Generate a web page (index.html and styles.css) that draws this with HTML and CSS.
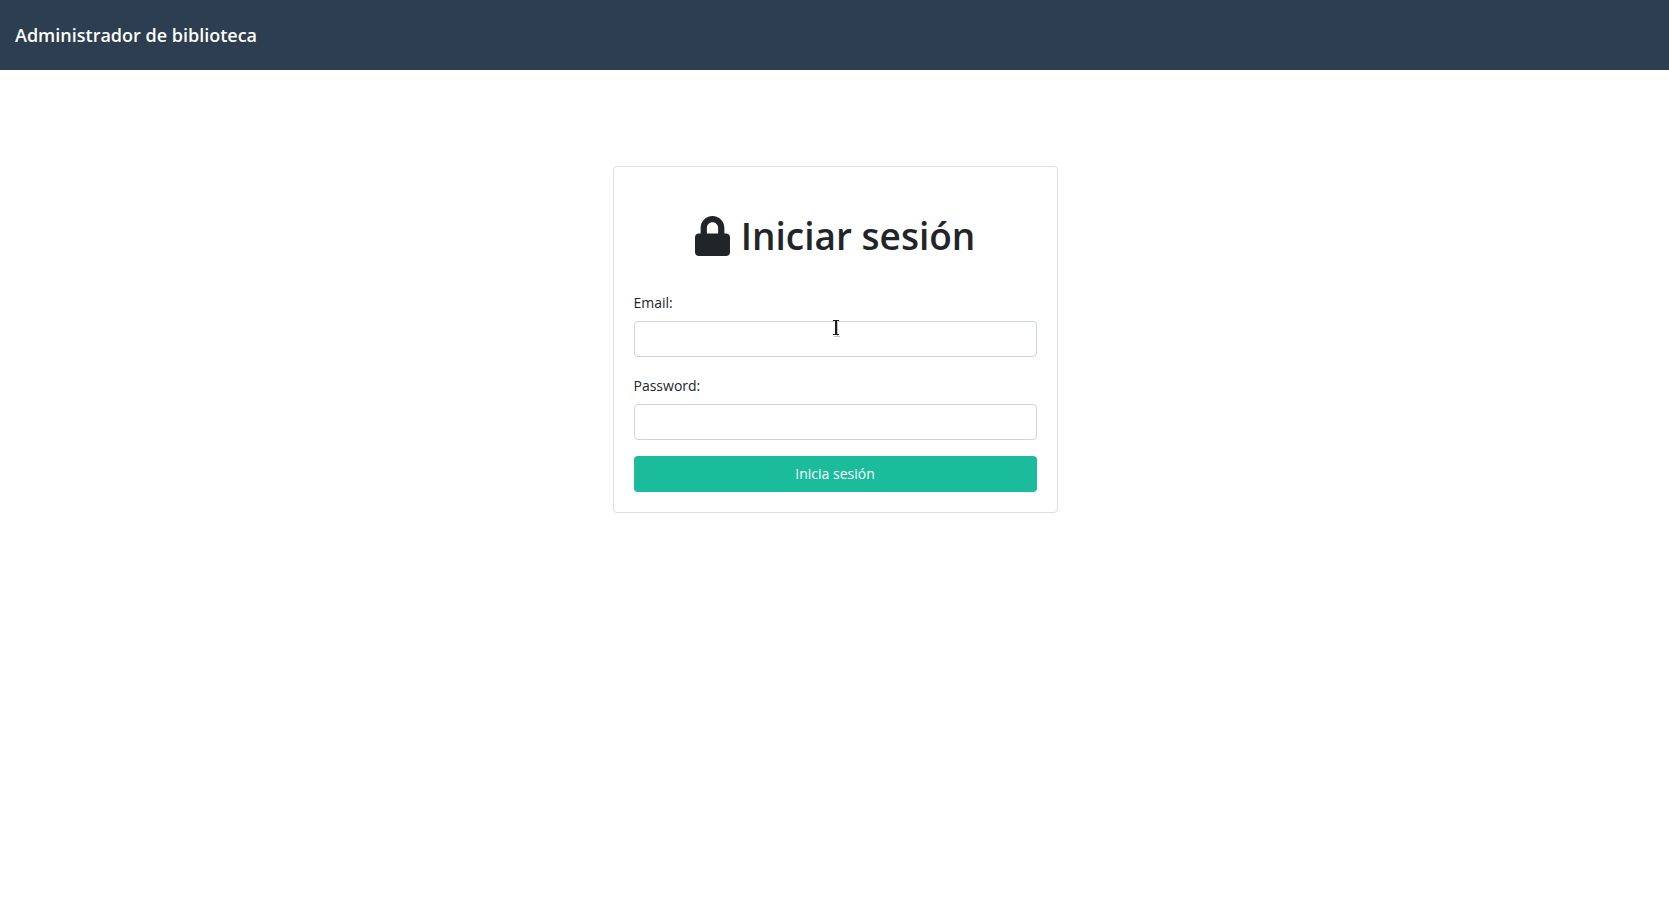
FILE: index.html
```html
<!DOCTYPE html>
<html lang="es">
<head>
<meta charset="utf-8">
<meta name="viewport" content="width=device-width, initial-scale=1">
<title>Administrador de biblioteca</title>
<link rel="stylesheet" href="styles.css">
</head>
<body>
<header class="navbar">
  <a class="brand" href="#">Administrador de biblioteca</a>
</header>
<main class="page">
  <form class="card">
    <h1 class="title">
      <svg class="lock" viewBox="0 0 448 512" aria-hidden="true"><path fill="currentColor" d="M400 224h-24v-72C376 68.200 307.800 0 224 0S72 68.200 72 152v72H48c-26.500 0-48 21.500-48 48v192c0 26.500 21.500 48 48 48h352c26.500 0 48-21.500 48-48V272c0-26.500-21.500-48-48-48zm-104 0H152v-72c0-39.700 32.300-72 72-72s72 32.300 72 72v72z"/></svg>
      <span>Iniciar sesión</span>
    </h1>
    <div class="field">
      <label class="label" for="email">Email:</label>
      <input class="input" id="email" type="email">
      <svg class="cursor" viewBox="0 0 9 18" aria-hidden="true"><path class="cursor-shadow" d="M2 16.500h6M5.500 2v14M7 1.500h1"/><path class="cursor-stroke" d="M1 .500h6M1 14.500h6"/><path class="cursor-stem" d="M4 0v15"/></svg>
    </div>
    <div class="field">
      <label class="label" for="password">Password:</label>
      <input class="input" id="password" type="password">
    </div>
    <button class="button" type="submit">Inicia sesión</button>
  </form>
</main>
</body>
</html>
```

FILE: styles.css
```css
* {
  box-sizing: border-box;
}

body {
  margin: 0;
  background: #fff;
  color: #212529;
  font-family: "Segoe UI", "Open Sans", "Noto Sans", sans-serif;
  font-size: 14px;
  line-height: 24px;
}

.navbar {
  display: flex;
  align-items: center;
  min-height: 70px;
  padding: 0 15px;
  background: #2c3e50;
}

.brand {
  color: #fff;
  font-size: 18px;
  font-weight: 600;
  text-decoration: none;
}

.page {
  display: flex;
  justify-content: center;
  padding: 96px 15px 15px 16px;
}

.card {
  width: 100%;
  max-width: 445px;
  padding: 20px;
  border: 1px solid #dfdfdf;
  border-radius: 4px;
}

.title {
  display: flex;
  align-items: center;
  justify-content: center;
  gap: 11px;
  margin: 24px 0 29px;
  font-size: 37px;
  font-weight: 600;
  line-height: 50px;
}

.lock {
  width: 35px;
  height: 40px;
}

.field {
  position: relative;
  margin-bottom: 16px;
}

.label {
  display: block;
  margin-bottom: 5px;
  line-height: 26px;
}

.input {
  display: block;
  width: 100%;
  height: 36px;
  padding: 6px 12px;
  border: 1px solid #ced4da;
  border-radius: 4px;
  background: #fff;
  color: #495057;
  font: inherit;
}

.button {
  display: block;
  width: 100%;
  height: 36px;
  padding: 6px 12px;
  border: 0;
  border-radius: 4px;
  background: #1abc9c;
  color: #fff;
  font: inherit;
  cursor: pointer;
}

.cursor {
  position: absolute;
  top: 30px;
  left: calc(50% - 3px);
  width: 9px;
  height: 18px;
  fill: none;
  pointer-events: none;
}

.cursor-shadow {
  stroke: #c5c5b8;
}

.cursor-stroke {
  stroke: #1b1b28;
}

.cursor-stem {
  stroke: #1b1b28;
  stroke-width: 2;
}
```
